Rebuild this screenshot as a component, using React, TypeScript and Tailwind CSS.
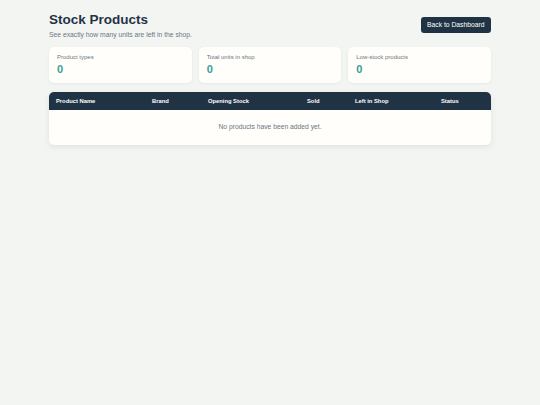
import React from "react";

const stats = [
  { label: "Product types", value: 0 },
  { label: "Total units in shop", value: 0 },
  { label: "Low-stock products", value: 0 },
];

const columns = ["Product Name", "Brand", "Opening Stock", "Sold", "Left in Shop", "Status"];

const App: React.FC = () => {
  return (
    <div
      className="min-h-screen w-full bg-[#f3f5f3] text-[#1f3344]"
      style={{ fontFamily: '"Liberation Sans", Arial, sans-serif' }}
    >
      <div className="mx-auto w-[442px] pt-[11px]">
        <div className="flex items-start justify-between">
          <div>
            <h1 className="text-[13.5px] font-bold leading-[18px] text-[#1f3344]">Stock Products</h1>
            <p className="mt-[1px] text-[6.75px] leading-[9px] text-[#6b7780]">
              See exactly how many units are left in the shop.
            </p>
          </div>
          <button className="mt-[6px] h-[16px] rounded-[3px] bg-[#1f3344] px-[6.5px] text-[6.75px] leading-[16px] text-white">
            Back to Dashboard
          </button>
        </div>

        <div className="mt-[8px] grid grid-cols-3 gap-[7px]">
          {stats.map((s) => (
            <div
              key={s.label}
              className="h-[36px] rounded-[5px] bg-[#fffefb] px-[8px] pt-[7px] shadow-[0_1px_3px_rgba(0,0,0,0.06)]"
            >
              <div className="text-[6px] leading-[7px] text-[#6b7780]">{s.label}</div>
              <div className="mt-[1px] text-[11px] font-bold leading-[14px] text-[#3a9d93]">{s.value}</div>
            </div>
          ))}
        </div>

        <div className="mt-[9px] overflow-hidden rounded-[5px] bg-[#fffefb] shadow-[0_2px_6px_rgba(0,0,0,0.08)]">
          <div className="grid h-[18px] grid-cols-[96px_56px_99px_48px_86px_57px] items-center bg-[#1f3344]">
            {columns.map((c) => (
              <div key={c} className="pl-[7px] text-[5.8px] font-bold text-white">
                {c}
              </div>
            ))}
          </div>
          <div className="flex h-[35px] items-center justify-center text-[6.75px] text-[#6b7780]">
            No products have been added yet.
          </div>
        </div>
      </div>
    </div>
  );
};

export default App;
